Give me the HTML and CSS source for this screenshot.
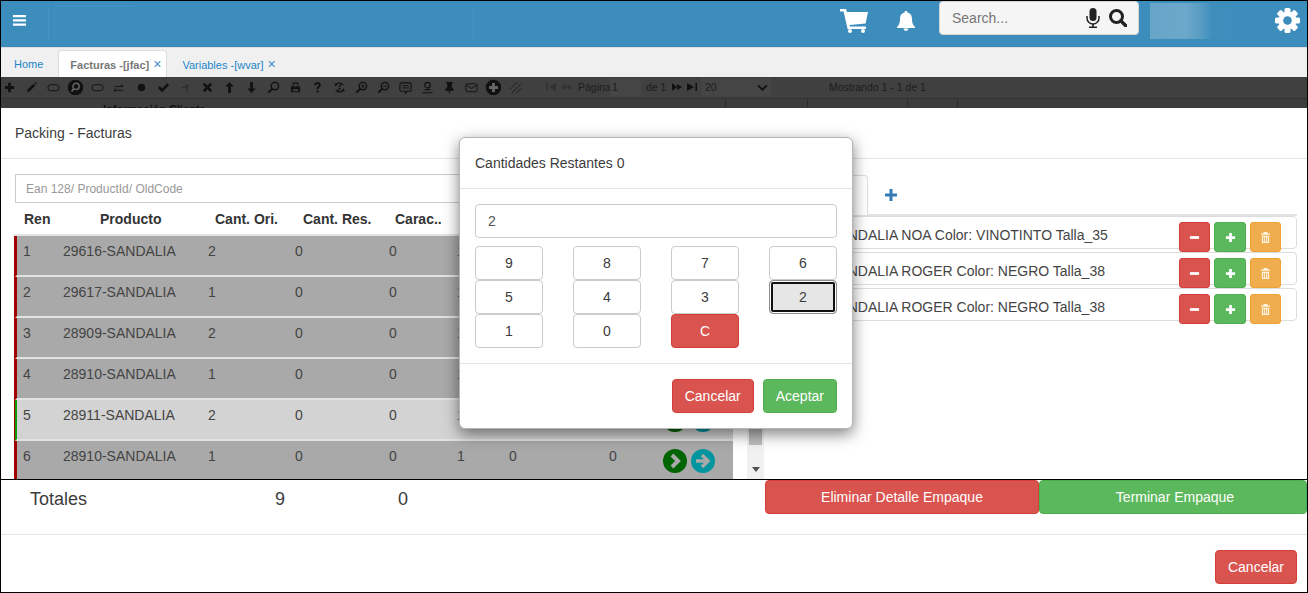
FILE: index.html
```html
<!DOCTYPE html>
<html lang="es">
<head>
<meta charset="utf-8">
<title>Packing - Facturas</title>
<link rel="stylesheet" href="styles.css">
</head>
<body>
<div class="frame">
  <header class="topbar">
    <svg class="burger" viewBox="0 0 13 11"><path d="M0 0h13v2.2H0zM0 4.3h13v2.2H0zM0 8.6h13v2.2H0z"/></svg>
    <div class="logo-slot"></div>
    <svg class="cart" viewBox="0 0 28 24"><path d="M0 0h6l1 3h21l-2.400 11.500-16 1.500.4 1.600H26V20H7.600L3.600 2.500H0z"/><circle cx="10" cy="22" r="2"/><circle cx="23" cy="22" r="2"/></svg>
    <svg class="bell" viewBox="0 0 18 20"><path d="M9 0a1.500 1.500 0 0 1 1.500 1.700C14 2.400 15 5 15 8c0 4 1 6 3 8v1H0v-1c2-2 3-4 3-8 0-3 1-5.600 4.500-6.300A1.500 1.500 0 0 1 9 0zM6.500 17.600h5a2.500 2.400 0 0 1-5 0z"/></svg>
    <div class="searchbox">
      <input class="searchinput" type="text" placeholder="Search...">
      <svg class="mic" viewBox="0 0 14 20"><rect x="3.500" y="0" width="7" height="13" rx="3.500"/><path d="M1 8v2a6 6 0 0 0 12 0V8" fill="none" stroke="#222" stroke-width="1.500"/><path d="M6.200 16h1.600v2.400H11V20H3v-1.600h3.200z"/></svg>
      <svg class="lens" viewBox="0 0 18 18"><circle cx="7.500" cy="7.500" r="6" fill="none" stroke="#222" stroke-width="3"/><path d="M11.800 11.800l5 5" stroke="#222" stroke-width="3.400" stroke-linecap="round"/></svg>
    </div>
    <div class="avatar"></div>
    <svg class="gear" viewBox="0 0 25 25"><g fill="#fff"><rect x="9.500" width="6" height="25" rx="1.500"/><rect x="9.500" width="6" height="25" rx="1.500" transform="rotate(45 12.500 12.500)"/><rect x="9.500" width="6" height="25" rx="1.500" transform="rotate(90 12.500 12.500)"/><rect x="9.500" width="6" height="25" rx="1.500" transform="rotate(135 12.500 12.500)"/><circle cx="12.500" cy="12.500" r="9"/></g><circle cx="12.500" cy="12.500" r="4.300" fill="#3c8dbc"/></svg>
  </header>

  <nav class="tabs">
    <a class="tab">Home</a>
    <a class="tab tab-active">Facturas -[jfac]<span class="tab-x">×</span></a>
    <a class="tab">Variables -[wvar]<span class="tab-x">×</span></a>
  </nav>

  <div class="toolbar">
    <div class="tools">
      <svg class="ti" viewBox="0 0 14 14"><path d="M5.500 2h3v3.500H12v3H8.500V12h-3V8.500H2v-3h3.500z"/></svg>
      <svg class="ti" viewBox="0 0 14 14"><path d="M2 12l1-3 6-6 2 2-6 6zM10 2l1-1 2 2-1 1z"/></svg>
      <svg class="ti" viewBox="0 0 14 14"><rect x="1" y="4" width="12" height="6.500" rx="3" fill="none" stroke="#111" stroke-width="1"/></svg>
      <svg class="ti ti-big" viewBox="0 0 14 14"><circle cx="7" cy="7" r="7"/><circle cx="7.500" cy="6" r="2.800" fill="none" stroke="#666" stroke-width="1.300"/><path d="M5.500 8L3.500 10.500" stroke="#666" stroke-width="1.500"/></svg>
      <svg class="ti" viewBox="0 0 14 14"><rect x="1" y="4" width="12" height="6.500" rx="3" fill="none" stroke="#111" stroke-width="1"/></svg>
      <svg class="ti" viewBox="0 0 14 14"><path d="M1 6h9M8 4l3 2M3 8l-2 2h10M1 10l2 2M11 6L9 4" fill="none" stroke="#111" stroke-width="1"/></svg>
      <svg class="ti" viewBox="0 0 14 14"><circle cx="7" cy="7" r="4"/></svg>
      <svg class="ti" viewBox="0 0 14 14"><path d="M1 7.500l2-2 2.500 2.500L11 2.500l2 2-7.500 7.500z"/></svg>
      <svg class="ti ti-dim" viewBox="0 0 14 14"><path d="M8 12V6H5.500l2-3 .5 1h3v2H9.500v6z"/><path d="M3 6h6v1.500H3z"/></svg>
      <svg class="ti" viewBox="0 0 14 14"><path d="M2 4l2-2 3 3 3-3 2 2-3 3 3 3-2 2-3-3-3 3-2-2 3-3z"/></svg>
      <svg class="ti" viewBox="0 0 14 14"><path d="M7 1l4.500 5H8.500v7h-3V6H2.500z"/></svg>
      <svg class="ti" viewBox="0 0 14 14"><path d="M7 13L2.500 8h3V1h3v7h3z"/></svg>
      <svg class="ti" viewBox="0 0 14 14"><circle cx="8.500" cy="5.500" r="4" fill="none" stroke="#111" stroke-width="1.500"/><path d="M5.500 8.500L1.500 12.500" stroke="#111" stroke-width="2.200"/></svg>
      <svg class="ti" viewBox="0 0 14 14"><path d="M4 6V1.500h6V6h2v6H2V6zM5 3v3h4V3zM4 9v2h6V9z" fill-rule="evenodd"/></svg>
      <svg class="ti" viewBox="0 0 14 14"><path d="M3.500 4.500C3.500 2 5 1 7 1s3.500 1 3.500 3.200c0 2.600-2.300 2.300-2.300 4.300H6c0-3 2.300-2.800 2.300-4.300C8.300 3.500 7.800 3 7 3s-1.300.6-1.300 1.500zM6 10h2.300v2.500H6z"/></svg>
      <svg class="ti" viewBox="0 0 14 14"><path d="M11 4.500A5 5 0 0 0 3 4M3 9.500a5 5 0 0 0 8 .5" fill="none" stroke="#111" stroke-width="1.500"/><path d="M1 3l4 0-2 3zM13 11l-4 0 2-3zM5 7l4-5-1 4zM9 7l-4 5 1-4z"/></svg>
      <svg class="ti" viewBox="0 0 14 14"><circle cx="8.500" cy="5.500" r="4" fill="none" stroke="#111" stroke-width="1.500"/><path d="M5.500 8.500L1.500 12.500" stroke="#111" stroke-width="2.200"/><path d="M6.500 5.500h4M8.500 3.500v4" stroke="#111"/></svg>
      <svg class="ti" viewBox="0 0 14 14"><circle cx="8.500" cy="5.500" r="4" fill="none" stroke="#111" stroke-width="1.500"/><path d="M5.500 8.500L1.500 12.500" stroke="#111" stroke-width="2.200"/><path d="M6.500 5.500h4" stroke="#111"/></svg>
      <svg class="ti" viewBox="0 0 14 14"><path d="M2.500 2h9A1.500 1.500 0 0 1 13 3.500v6a1.500 1.500 0 0 1-1.500 1.500H9l-2 2.500V11H2.500A1.500 1.500 0 0 1 1 9.500v-6A1.500 1.500 0 0 1 2.500 2z" fill="none" stroke="#111" stroke-width="1.200"/><path d="M3.500 5h7M3.500 7.500h7" stroke="#111"/></svg>
      <svg class="ti" viewBox="0 0 14 14"><circle cx="7" cy="4.500" r="3" fill="none" stroke="#111" stroke-width="1.300"/><path d="M3 10c1-1.500 2-1.500 4-1.500s3 0 4 1.500zM1.500 12h11v1.300h-11z"/></svg>
      <svg class="ti" viewBox="0 0 14 14"><path d="M3.500 1h7v1.500L9.500 3v4l2 2v1.500H8L7 14l-1-3.500H2.500V9l2-2V3l-1-.5z"/></svg>
      <svg class="ti" viewBox="0 0 14 14"><rect x="1" y="3" width="12" height="8.500" rx="1.500" fill="none" stroke="#111" stroke-width="1"/><path d="M1.500 4.500L7 8l5.500-3.500" fill="none" stroke="#111"/></svg>
      <svg class="ti ti-big" viewBox="0 0 14 14"><circle cx="7" cy="7" r="7"/><path d="M5.700 3h2.600v2.700H11v2.600H8.300V11H5.700V8.300H3V5.700h2.700z" fill="#666"/></svg>
      <svg class="ti" viewBox="0 0 14 14"><path d="M1 9l8-8M3 13L13 3M8 13l5-5" fill="none" stroke="#111" stroke-dasharray="2 .6"/></svg>
    </div>
    <div class="pager">
      <svg class="pi pi-dim" viewBox="0 0 12 10"><path d="M1 1h1.500v8H1zM11 1v8L4 5z"/></svg>
      <svg class="pi pi-dim" viewBox="0 0 12 10"><path d="M6 2v6L1 5zM11 2v6L6 5z"/></svg>
      <span class="pager-label">Página</span>
      <span class="pager-box">1</span>
      <span class="pager-de">de 1</span>
      <svg class="pi pi-next" viewBox="0 0 12 10"><path d="M1 1v8l5-4zM6 2v6l5-3z"/></svg>
      <svg class="pi" viewBox="0 0 12 10"><path d="M1 1v8l7-4zM9.500 1H11v8H9.500z"/></svg>
      <span class="pager-select">20
        <svg class="chev" viewBox="0 0 12 8"><path d="M1 1.500l5 5 5-5" fill="none" stroke="#111" stroke-width="2.200"/></svg>
      </span>
      <span class="pager-count">Mostrando 1 - 1 de 1</span>
    </div>
    <div class="subhead">
      <span class="subhead-title">Información Cliente</span>
      <i class="subhead-cell subhead-a"></i>
      <i class="subhead-cell subhead-b"></i>
      <i class="subhead-cell subhead-c"></i>
      <i class="subhead-cell subhead-d"></i>
    </div>
  </div>

  <main class="panel">
    <div class="panel-head">Packing - Facturas</div>
    <div class="panel-body">
      <section class="left">
        <input class="scan" type="text" placeholder="Ean 128/ ProductId/ OldCode">
        <div class="thead">
          <b>Ren</b><b>Producto</b><b>Cant. Ori.</b><b>Cant. Res.</b><b>Carac..</b>
        </div>
        <div class="tablewrap">
          <div class="rows">
            <div class="row"><span>1</span><span>29616-SANDALIA</span><span>2</span><span>0</span><span>0</span><span>1</span><span></span><span></span><span class="go"></span></div>
            <div class="row"><span>2</span><span>29617-SANDALIA</span><span>1</span><span>0</span><span>0</span><span>1</span><span></span><span></span><span class="go"></span></div>
            <div class="row"><span>3</span><span>28909-SANDALIA</span><span>2</span><span>0</span><span>0</span><span>1</span><span></span><span></span><span class="go"></span></div>
            <div class="row"><span>4</span><span>28910-SANDALIA</span><span>1</span><span>0</span><span>0</span><span>1</span><span></span><span></span><span class="go"></span></div>
            <div class="row row-ok"><span>5</span><span>28911-SANDALIA</span><span>2</span><span>0</span><span>0</span><span>1</span><span></span><span></span><span class="go"><svg viewBox="0 0 24 24"><circle cx="12" cy="12" r="12" fill="#006400"/><path d="M9 6l6 6-6 6" fill="none" stroke="#d3d3d3" stroke-width="4"/></svg><svg viewBox="0 0 24 24"><circle cx="12" cy="12" r="12" fill="#00959f"/><path d="M5 12h12M11 6l6 6-6 6" fill="none" stroke="#d3d3d3" stroke-width="3.500"/></svg></span></div>
            <div class="row"><span>6</span><span>28910-SANDALIA</span><span>1</span><span>0</span><span>0</span><span>1</span><span>0</span><span>0</span><span class="go"><svg viewBox="0 0 24 24"><circle cx="12" cy="12" r="12" fill="#006400"/><path d="M9 6l6 6-6 6" fill="none" stroke="#a9a9a9" stroke-width="4"/></svg><svg viewBox="0 0 24 24"><circle cx="12" cy="12" r="12" fill="#00959f"/><path d="M5 12h12M11 6l6 6-6 6" fill="none" stroke="#a9a9a9" stroke-width="3.500"/></svg></span></div>
          </div>
          <div class="scrollbar">
            <div class="thumb"></div>
            <div class="arrow"></div>
          </div>
        </div>
      </section>
      <section class="right">
        <div class="boxtabs">
          <div class="boxtab"></div>
          <svg class="boxplus" viewBox="0 0 12 12"><path d="M4.500 0h3v4.500H12v3H7.500V12h-3V7.500H0v-3h4.500z"/></svg>
        </div>
        <ul class="items">
          <li class="item"><span class="item-text">SANDALIA NOA Color: VINOTINTO Talla_35</span>
            <span class="actions">
              <button class="ab ab-red"><svg viewBox="0 0 12 12"><path d="M1 4.500h10v3H1z"/></svg></button>
              <button class="ab ab-green"><svg viewBox="0 0 12 12"><path d="M4.500 1h3v3.500H11v3H7.500V11h-3V7.500H1v-3h3.500z"/></svg></button>
              <button class="ab ab-orange"><svg viewBox="0 0 12 12"><path d="M4 0h4l.5 1.500H11V3H1V1.500h2.500zM2 4h8v8H2zM3.500 5.500v5h1v-5zM5.500 5.500v5h1v-5zM7.500 5.500v5h1v-5z" fill-rule="evenodd"/></svg></button>
            </span>
          </li>
          <li class="item"><span class="item-text">SANDALIA ROGER Color: NEGRO Talla_38</span>
            <span class="actions">
              <button class="ab ab-red"><svg viewBox="0 0 12 12"><path d="M1 4.500h10v3H1z"/></svg></button>
              <button class="ab ab-green"><svg viewBox="0 0 12 12"><path d="M4.500 1h3v3.500H11v3H7.500V11h-3V7.500H1v-3h3.500z"/></svg></button>
              <button class="ab ab-orange"><svg viewBox="0 0 12 12"><path d="M4 0h4l.5 1.500H11V3H1V1.500h2.500zM2 4h8v8H2zM3.500 5.500v5h1v-5zM5.500 5.500v5h1v-5zM7.500 5.500v5h1v-5z" fill-rule="evenodd"/></svg></button>
            </span>
          </li>
          <li class="item"><span class="item-text">SANDALIA ROGER Color: NEGRO Talla_38</span>
            <span class="actions">
              <button class="ab ab-red"><svg viewBox="0 0 12 12"><path d="M1 4.500h10v3H1z"/></svg></button>
              <button class="ab ab-green"><svg viewBox="0 0 12 12"><path d="M4.500 1h3v3.500H11v3H7.500V11h-3V7.500H1v-3h3.500z"/></svg></button>
              <button class="ab ab-orange"><svg viewBox="0 0 12 12"><path d="M4 0h4l.5 1.500H11V3H1V1.500h2.500zM2 4h8v8H2zM3.500 5.500v5h1v-5zM5.500 5.500v5h1v-5zM7.500 5.500v5h1v-5z" fill-rule="evenodd"/></svg></button>
            </span>
          </li>
        </ul>
      </section>
    </div>
    <div class="totals">
      <div class="totals-figures"><span>Totales</span><span>9</span><span>0</span></div>
      <button class="btn btn-red btn-wide-a">Eliminar Detalle Empaque</button>
      <button class="btn btn-green btn-wide-b">Terminar Empaque</button>
    </div>
    <div class="panel-foot"><button class="btn btn-red">Cancelar</button></div>
  </main>

  <div class="numpad">
    <div class="numpad-head">Cantidades Restantes 0</div>
    <div class="numpad-body">
      <input class="numpad-input" type="text" value="2">
      <div class="keys">
        <button class="key">9</button><button class="key">8</button><button class="key">7</button><button class="key">6</button>
        <button class="key">5</button><button class="key">4</button><button class="key">3</button><button class="key key-focus">2</button>
        <button class="key">1</button><button class="key">0</button><button class="key key-c">C</button>
      </div>
    </div>
    <div class="numpad-foot">
      <button class="btn btn-red">Cancelar</button>
      <button class="btn btn-green">Aceptar</button>
    </div>
  </div>
</div>
</body>
</html>
```
FILE: styles.css
```css
* { box-sizing: border-box; }
html, body { margin: 0; height: 593px; overflow: hidden; background: #fff; }
body { font-family: "Liberation Sans", Arial, sans-serif; font-size: 14px; color: #3c3c3c; }
button { font-family: inherit; }
svg { display: block; flex: none; }

.frame { position: relative; height: 593px; border: 1px solid #000; display: flex; flex-direction: column; overflow: hidden; }

/* top bar */
.topbar { height: 46px; flex: none; background: #3c8dbc; display: flex; align-items: flex-start; }
.burger { width: 13px; height: 11px; margin: 14px 0 0 12px; fill: #fff; }
.logo-slot { width: 426px; height: 34px; margin: 5px 0 0 22px; border-left: 1px solid #4594c3; border-right: 1px solid #4594c3; background: linear-gradient(#4594c3, #4594c3) 6px 0 / 80px 1px no-repeat; }
.cart { width: 28px; height: 24px; margin: 8px 0 0 366px; fill: #fff; }
.bell { width: 18px; height: 20px; margin: 10px 0 0 29px; fill: #fff; }
.searchbox { width: 200px; height: 34px; margin: 0 0 0 24px; background: #f5f5f5; border-radius: 4px; border: 1px solid #d5d5d5; display: flex; align-items: center; padding: 0 12px; }
.searchinput { width: 130px; border: 0; background: transparent; font: 14px "Liberation Sans", Arial, sans-serif; color: #555; outline: 0; padding: 0; }
.searchinput::placeholder { color: #777; opacity: 1; }
.mic { width: 14px; height: 20px; margin-left: 4px; fill: #222; }
.lens { width: 18px; height: 18px; margin-left: 9px; }
.avatar { width: 100px; height: 36px; margin: 2px 0 0 11px; background: linear-gradient(90deg, #66a4c8 0, #6ca8ca 35%, #5d9fc5 48%, #3f8fbd 62%, #3c8dbc 100%); }
.gear { width: 25px; height: 25px; margin: 7px 0 0 25px; }

/* tabs */
.tabs { height: 30px; flex: none; background: #f0f0f0; border-top: 1px solid #ddd; display: flex; align-items: flex-end; font-size: 11px; }
.tab { height: 27px; line-height: 26px; padding: 0 12px; color: #1c86c8; border: 1px solid transparent; border-bottom: 0; margin-right: 2px; white-space: nowrap; }
.tab-active { background: #fff; border-color: #ddd; border-radius: 4px 4px 0 0; color: #777; font-weight: bold; padding: 0 5px 0 11px; }
.tab-x { margin-left: 4px; font-weight: normal; font-size: 14px; color: #3d8ecb; }

/* toolbar */
.toolbar { height: 31px; flex: none; background: #404040; display: flex; flex-wrap: wrap; align-items: flex-start; align-content: flex-start; overflow: hidden; }
.tools { display: flex; align-items: center; gap: 9px; padding: 0 0 1px 2px; height: 21px; width: 530px; }
.ti { width: 13px; height: 13px; fill: #111; }
.ti-big { transform: scale(1.2); }
.ti-dim { opacity: .35; }
.pager { display: flex; align-items: center; height: 21px; padding-bottom: 1px; font-size: 10.5px; color: #1c1c1c; }
.pi { width: 12px; height: 10px; fill: #111; margin-left: 3px; }
.pi-dim { opacity: .3; }
.pi:first-child { margin-left: 14px; }
.pager-label { margin-left: 6px; width: 32px; }
.pager-box { width: 31px; height: 18px; line-height: 18px; background: #454545; padding-left: 2px; }
.pager-de { margin-left: 5px; width: 22px; }
.pager-select { width: 70px; height: 18px; line-height: 18px; margin-left: 3px; background: #454545; padding: 0 3px 0 4px; display: flex; align-items: center; justify-content: space-between; }
.chev { width: 11px; height: 7px; }
.pager-count { margin-left: 58px; }
.subhead { width: 100%; height: 10px; border-top: 1px solid #333; position: relative; background: #3d3d3d; overflow: hidden; }
.subhead-title { display: block; margin-left: 102px; font-size: 11px; font-weight: bold; color: #111; line-height: 21px; }
.subhead-cell { position: absolute; top: 0; bottom: 0; width: 1px; background: #2e2e2e; }
.subhead-a { left: 724px; } .subhead-b { left: 806px; } .subhead-c { left: 906px; } .subhead-d { left: 956px; }

/* packing panel */
.panel { flex: 1; min-height: 0; background: #fff; display: flex; flex-direction: column; }
.panel-head { height: 51px; flex: none; border-bottom: 1px solid #e5e5e5; padding: 15px 14px 0; line-height: 20px; }
.panel-body { height: 320px; flex: none; display: flex; overflow: hidden; }
.left { width: 764px; flex: none; padding: 15px 0 0 13px; }
.scan { display: block; width: 736px; height: 29px; margin-left: 1px; border: 1px solid #ccc; padding: 0 10px; font: 12px "Liberation Sans", Arial, sans-serif; outline: 0; }
.scan::placeholder { color: #999; opacity: 1; }
.thead { height: 33px; display: grid; grid-template-columns: 76px 115px 88px 92px 1fr; padding-left: 10px; line-height: 32px; color: #333; width: 720px; border-bottom: 2px solid #e2e2e2; }
.thead b { font-weight: bold; font-size: 14px; }
.tablewrap { display: flex; align-items: flex-start; }
.rows { width: 719px; border-left: 1px solid #a00000; flex: none; }
.row { height: 41px; display: grid; grid-template-columns: 40px 145px 87px 94px 68px 52px 100px 54px 1fr; background: #a9a9a9; border-bottom: 2px solid #e2e2e2; border-left: 2px solid #a00000; padding: 5px 0 0 6px; line-height: 20px; color: #444; }
.row-ok { background: #d3d3d3; border-left-color: #0a9a0a; }
.go { display: flex; gap: 4px; margin-top: 1px; }
.go svg { width: 24px; height: 24px; margin-top: 2px; }
.scrollbar { width: 17px; height: 243px; margin-left: 14px; background: #f1f1f1; padding: 17px 2px 0; flex: none; }
.thumb { height: 192px; background: #bdbdbd; }
.arrow { width: 0; height: 0; margin: 22px auto 0; border: 4px solid transparent; border-top: 5px solid #505050; border-bottom: 0; }
.right { flex: 1; min-width: 0; padding: 16px 10px 0 10px; }
.boxtabs { height: 41px; border-bottom: 2px solid #e2e2e2; display: flex; }
.boxtab { width: 93px; height: 40px; border: 1px solid #ddd; border-bottom: 0; border-radius: 4px 4px 0 0; background: #fff; }
.boxplus { width: 12px; height: 12px; fill: #337ab7; margin: 14px 0 0 17px; }
.items { list-style: none; margin: 0; padding: 0; }
.item { height: 33px; margin-bottom: 3px; border: 1px solid #ddd; border-radius: 4px; display: flex; padding: 8px 15px 0 53px; line-height: 20px; color: #444; }
.item-text { white-space: nowrap; }
.actions { margin-left: auto; display: flex; gap: 4px; margin-top: -3px; height: 30px; }
.ab { width: 31px; height: 30px; border-radius: 3px; border: 1px solid; padding: 0; display: flex; align-items: center; justify-content: center; }
.ab svg { width: 11px; height: 11px; fill: #fff; }
.ab-red { background: #d9534f; border-color: #d43f3a; }
.ab-green { width: 32px; background: #5cb85c; border-color: #4cae4c; }
.ab-orange { background: #f0ad4e; border-color: #eea236; }
.ab-orange svg { fill: #fdf3e0; }

.totals { height: 56px; flex: none; border-top: 1px solid #000; border-bottom: 1px solid #e5e5e5; display: flex; align-items: flex-start; }
.totals-figures { width: 764px; flex: none; display: grid; grid-template-columns: 245px 123px 1fr; padding: 9px 0 0 29px; font-size: 18px; line-height: 20px; }
.btn { height: 34px; border: 1px solid; border-radius: 4px; padding: 0 12px; font-size: 14px; color: #fff; line-height: 20px; }
.btn-red { background: #d9534f; border-color: #d43f3a; }
.btn-green { background: #5cb85c; border-color: #4cae4c; }
.btn-wide-a { width: 274px; }
.btn-wide-b { flex: 1; padding-left: 16px; padding-right: 12px; }
.panel-foot { flex: 1; display: flex; justify-content: flex-end; padding: 15px 10px 0 0; }

/* numeric dialog */
.numpad { position: absolute; left: 458px; top: 136px; width: 394px; background: #fff; border: 1px solid #b5b5b5; border-radius: 6px; box-shadow: 0 5px 15px rgba(0,0,0,.5); }
.numpad-head { height: 51px; padding: 15px; line-height: 20px; border-bottom: 1px solid #e5e5e5; }
.numpad-body { padding: 15px; border-bottom: 1px solid #e5e5e5; }
.numpad-input { display: block; width: 100%; height: 34px; border: 1px solid #ccc; border-radius: 4px; padding: 0 12px; font: 14px "Liberation Sans", Arial, sans-serif; color: #555; outline: 0; }
.keys { margin-top: 8px; display: grid; grid-template-columns: repeat(4, 68px); grid-auto-rows: 34px; column-gap: 30px; }
.key { border: 1px solid #ccc; border-radius: 4px; background: #fff; color: #3c3c3c; font-size: 14px; padding: 0; }
.key-focus { background: #e6e6e6; border-color: #8c8c8c; box-shadow: inset 0 0 0 1px #fff, inset 0 0 0 3px #111; }
.key-c { background: #d9534f; border-color: #d43f3a; color: #fff; }
.numpad-foot { padding: 15px; display: flex; justify-content: flex-end; gap: 9px; }
```
